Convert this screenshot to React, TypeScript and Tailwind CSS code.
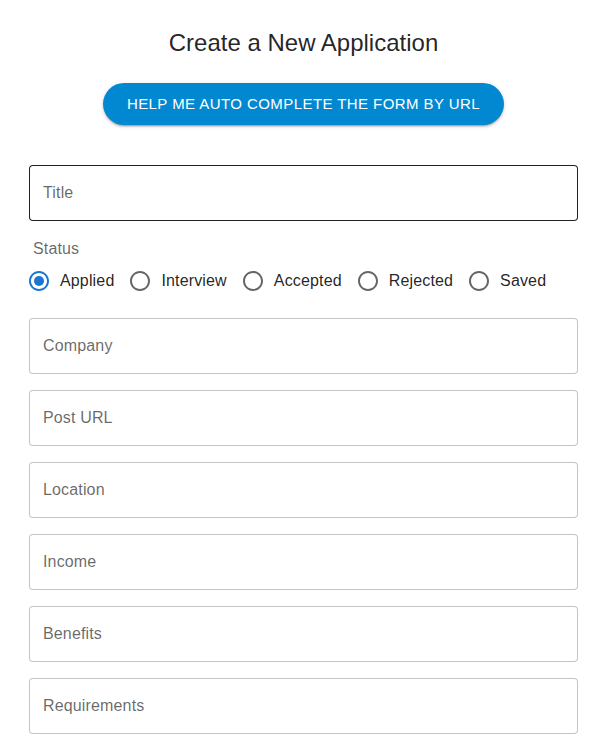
import { FC, useState } from "react";

const statuses = ["Applied", "Interview", "Accepted", "Rejected", "Saved"];
const fields = ["Company", "Post URL", "Location", "Income", "Benefits", "Requirements"];

const RadioIcon: FC<{ checked: boolean }> = ({ checked }) => (
  <svg viewBox="0 0 24 24" className="h-6 w-6" fill="currentColor">
    <path d="M12 2C6.48 2 2 6.48 2 12s4.48 10 10 10 10-4.48 10-10S17.52 2 12 2zm0 18c-4.42 0-8-3.58-8-8s3.58-8 8-8 8 3.58 8 8-3.58 8-8 8z" />
    {checked && <circle cx="12" cy="12" r="5" />}
  </svg>
);

const TextField: FC<{ label: string; active?: boolean }> = ({ label, active }) => (
  <input
    placeholder={label}
    className={`h-14 w-full rounded border bg-white px-[13px] text-base tracking-[0.00938em] text-[rgba(0,0,0,0.87)] outline-none placeholder:text-[rgba(0,0,0,0.6)] ${
      active ? "border-[rgba(0,0,0,0.87)]" : "border-[rgba(0,0,0,0.23)]"
    }`}
  />
);

const App: FC = () => {
  const [status, setStatus] = useState("Applied");

  return (
    <div className="min-h-[748px] w-[607px] bg-white font-['Liberation_Sans',Arial,sans-serif]">
      <div className="flex flex-col items-center pt-[27px]">
        <h2 className="text-2xl leading-8 text-[rgba(0,0,0,0.87)]">Create a New Application</h2>
        <button className="mt-6 rounded-full bg-[#0288d1] px-6 py-2 text-[15px] leading-[26px] tracking-[0.02857em] text-white uppercase shadow-[0px_3px_1px_-2px_rgba(0,0,0,0.2),0px_2px_2px_0px_rgba(0,0,0,0.14),0px_1px_5px_0px_rgba(0,0,0,0.12)]">
          Help me auto complete the form by URL
        </button>
      </div>

      <div className="mx-[29px] mt-10 flex w-[549px] flex-col">
        <TextField label="Title" active />

        <div className="mt-4 flex flex-col tracking-[0.00938em]">
          <span className="pl-1 text-base leading-[23px] text-[rgba(0,0,0,0.6)]">Status</span>
          <div className="flex items-center">
            {statuses.map((s) => (
              <label
                key={s}
                className="-ml-[11px] mr-4 flex cursor-pointer items-center"
                onClick={() => setStatus(s)}
              >
                <span
                  className={`flex h-[42px] w-[42px] items-center justify-center ${
                    status === s ? "text-[#1976d2]" : "text-[rgba(0,0,0,0.6)]"
                  }`}
                >
                  <RadioIcon checked={status === s} />
                </span>
                <span className="text-base text-[rgba(0,0,0,0.87)]">{s}</span>
              </label>
            ))}
          </div>
        </div>

        <div className="mt-4 flex flex-col gap-4">
          {fields.map((f) => (
            <TextField key={f} label={f} />
          ))}
        </div>
      </div>
    </div>
  );
};

export default App;
